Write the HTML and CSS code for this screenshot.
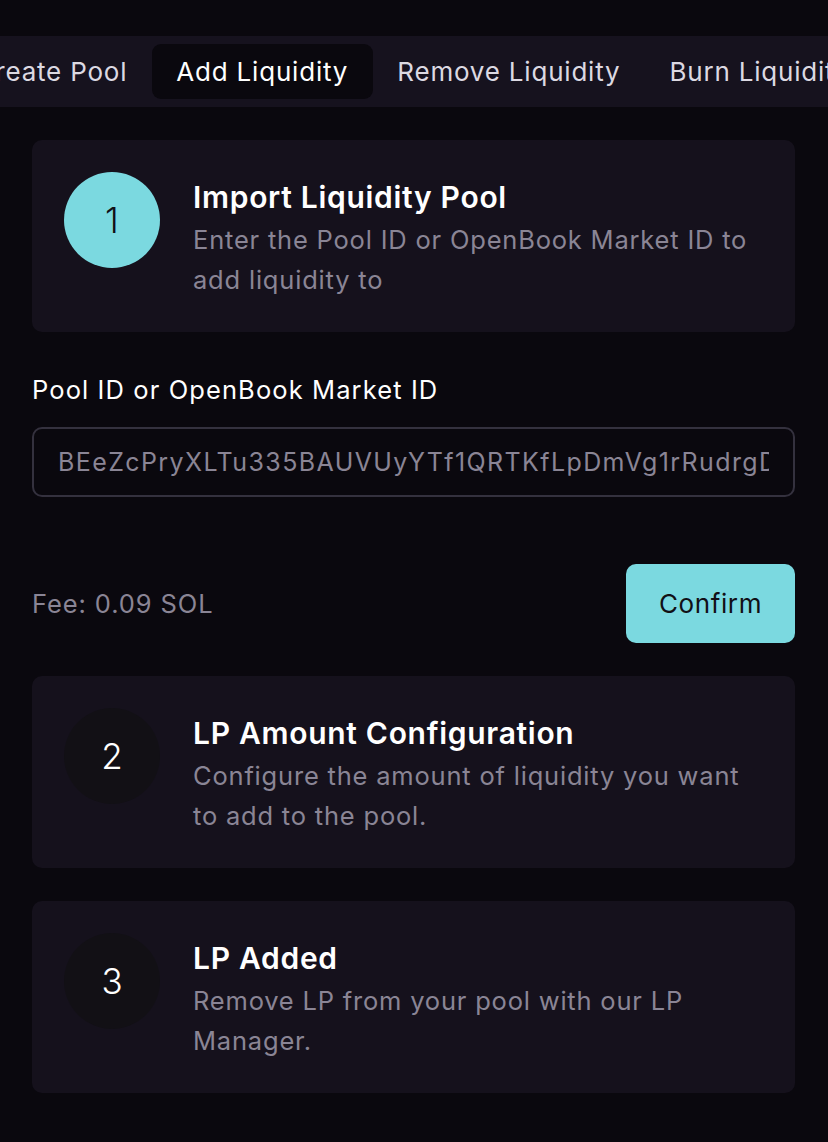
FILE: index.html
```html
<!DOCTYPE html>
<html lang="en">

<head>
  <title>Add Liquidity</title>
  <meta charset="UTF-8">
  <meta name="viewport" content="width=device-width, initial-scale=1">
  <link rel="stylesheet" href="styles.css">
</head>

<body>
  <nav class="tabs">
    <div class="tab-row">
      <span class="tab">Create Pool</span>
      <span class="tab active">Add Liquidity</span>
      <span class="tab">Remove Liquidity</span>
      <span class="tab">Burn Liquidity</span>
    </div>
  </nav>

  <div class="main">
    <div class="step">
      <div class="step-num current">1</div>
      <div class="step-text">
        <h2>Import Liquidity Pool</h2>
        <p>Enter the Pool ID or OpenBook Market ID to add liquidity to</p>
      </div>
    </div>

    <label class="field-label">Pool ID or OpenBook Market ID</label>
    <div class="field">
      <span class="field-value">BEeZcPryXLTu335BAUVUyYTf1QRTKfLpDmVg1rRudrgD</span>
    </div>

    <div class="fee-row">
      <span class="fee">Fee: 0.09 SOL</span>
      <button class="confirm">Confirm</button>
    </div>

    <div class="step">
      <div class="step-num">2</div>
      <div class="step-text">
        <h2>LP Amount Configuration</h2>
        <p>Configure the amount of liquidity you want to add to the pool.</p>
      </div>
    </div>

    <div class="step">
      <div class="step-num">3</div>
      <div class="step-text">
        <h2>LP Added</h2>
        <p>Remove LP from your pool with our LP Manager.</p>
      </div>
    </div>
  </div>
</body>

</html>
```

FILE: styles.css
```css
* {
  box-sizing: border-box;
}

body {
  font-family: Inter, "Noto Sans", sans-serif;
  margin: 0;
  padding-top: 36px;
  background-color: #0a080e;
  color: #ffffff;
}

/* Tab strip, scrolled a bit to the left */
.tabs {
  background-color: #16121e;
  height: 71px;
  padding: 8px 0;
  overflow: hidden;
}

.tab-row {
  display: flex;
  margin-left: -49px;
  white-space: nowrap;
}

.tab {
  padding: 0 24.5px;
  height: 55px;
  line-height: 55px;
  font-size: 26px;
  letter-spacing: 0.8px;
  color: #dcd9e2;
  border-radius: 9px;
}

.tab.active {
  background-color: #0a080e;
  color: #ffffff;
}

.main {
  padding: 33px 33px 0 32px;
}

/* Step cards */
.step {
  display: flex;
  gap: 33px;
  background-color: #15111c;
  border-radius: 10px;
  padding: 32px;
  margin-bottom: 33px;
}

.step-num {
  flex: none;
  width: 96px;
  height: 96px;
  border-radius: 50%;
  background-color: #121015;
  display: flex;
  align-items: center;
  justify-content: center;
  font-size: 35px;
  font-weight: 300;
  color: #ffffff;
}

.step-num.current {
  background-color: #7bd9e0;
  color: #111016;
}

.step-text {
  padding-top: 5px;
}

.step-text h2 {
  margin: 0 0 3px 0;
  font-size: 30px;
  letter-spacing: 0.7px;
  line-height: 40px;
  font-weight: 600;
}

.step-text p {
  margin: 0;
  font-size: 25.5px;
  letter-spacing: 0.8px;
  line-height: 40px;
  color: #8a8595;
}

/* Pool id field */
.field-label {
  display: block;
  font-size: 25.5px;
  letter-spacing: 1.1px;
  line-height: 36px;
  margin-top: 40px;
}

.field {
  display: flex;
  margin-top: 19px;
  height: 70px;
  border: 2px solid #34313e;
  border-radius: 10px;
  padding: 0 24px;
  line-height: 66px;
  font-size: 25px;
  letter-spacing: 1.4px;
  color: #8a8595;
}

.field-value {
  overflow: hidden;
  white-space: nowrap;
}

.fee-row {
  display: flex;
  justify-content: space-between;
  align-items: center;
  margin-top: 67px;
  margin-bottom: 33px;
}

.fee {
  font-size: 25.5px;
  letter-spacing: 0.9px;
  color: #8a8595;
}

.confirm {
  font-family: inherit;
  border: none;
  height: 79px;
  width: 169px;
  border-radius: 10px;
  background-color: #7bd9e0;
  color: #111016;
  font-size: 26px;
  letter-spacing: 0.6px;
}
```
